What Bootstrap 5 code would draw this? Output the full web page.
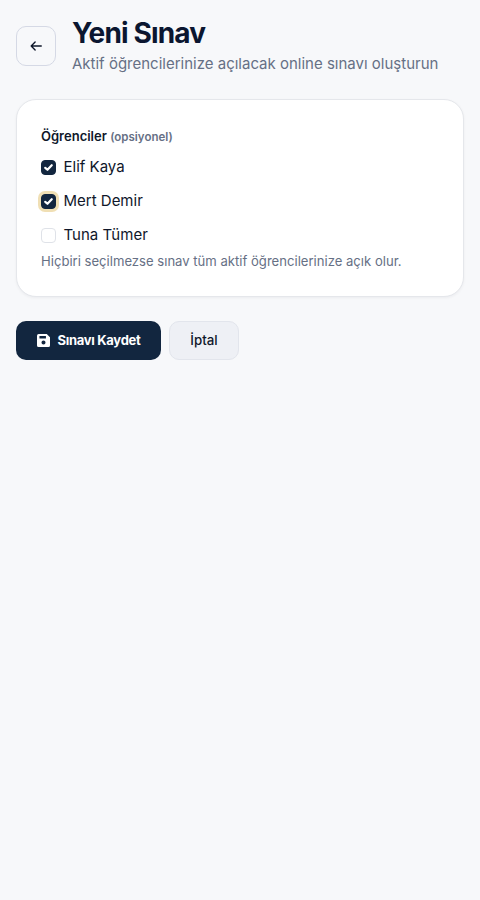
<!DOCTYPE html>
<html lang="tr">
<head>
<meta charset="utf-8">
<title>Yeni Sınav</title>
<link href="https://cdn.jsdelivr.net/npm/bootstrap@5.3.0/dist/css/bootstrap.min.css" rel="stylesheet">
<style>
body{background:#f7f8fa;font-family:Inter,"Liberation Sans",sans-serif;color:#0f172a;min-height:900px;}
.page-wrap{padding:16px;}
.head-row{gap:16px;margin-bottom:16px;height:67px;}
.back-btn{width:40px;height:40px;flex:none;border:1px solid #d5d9e5;border-radius:10px;background:transparent;margin-top:10px;color:#0f172a;padding:0;}
.page-title{font-size:28px;font-weight:700;line-height:34px;letter-spacing:-.84px;color:#0b1630;margin:0 0 2px;}
.page-sub{font-size:15px;line-height:24px;color:#667085;margin:0;}
.form-box{background:#fff;border:1px solid #e5e7eb;border-radius:20px;padding:24px;height:198px;box-shadow:0 1px 3px rgba(15,23,42,.05);margin-bottom:24px;}
.field-label{font-size:13px;font-weight:600;line-height:24px;color:#0f172a;margin-bottom:1px;display:block;}
.field-label span{font-size:11.5px;color:#667085;font-weight:600;}
.form-check.opt-row{margin:0;padding:0;min-height:34px;gap:7.5px;}
.opt-row .form-check-input{width:15px;height:15px;margin:0;float:none;border:1px solid #dfe2e8;border-radius:4px;flex:none;box-shadow:none;}
.opt-row .form-check-input:checked{background-color:#12263f;border-color:#12263f;background-image:url("data:image/svg+xml,%3csvg xmlns='http://www.w3.org/2000/svg' viewBox='0 0 20 20'%3e%3cpath fill='none' stroke='%23fff' stroke-linecap='round' stroke-linejoin='round' stroke-width='3.4' d='m5 10.5 3.4 3L15 6.5'/%3e%3c/svg%3e");}
.opt-row .form-check-input.is-focus{box-shadow:0 0 0 3px #f0dfb4;}
.opt-row .form-check-label{font-size:15px;line-height:24px;color:#0f172a;}
.field-hint{font-size:13.1px;line-height:20px;color:#667085;margin:-1px 0 0;}
.save-btn{background:#12263f;color:#fff;border:0;border-radius:10px;height:39px;width:145px;font-size:13px;font-weight:700;letter-spacing:-.3px;gap:8px;padding:0;}
.save-btn:hover{background:#12263f;color:#fff;}
.cancel-btn{background:#eef0f5;color:#0f172a;border:1px solid #e2e5ec;border-radius:10px;height:39px;width:70px;font-size:13.3px;font-weight:500;padding:0;}
</style>
</head>
<body>
<div class="page-wrap">
  <div class="d-flex align-items-start head-row">
    <button type="button" class="btn back-btn d-flex align-items-center justify-content-center" aria-label="Geri">
      <svg width="14" height="14" viewBox="0 0 16 16" fill="none" stroke="currentColor" stroke-width="1.6" stroke-linecap="round" stroke-linejoin="round"><path d="M14 8H2.5M7 3.5 2.5 8 7 12.5"/></svg>
    </button>
    <div>
      <h1 class="page-title">Yeni Sınav</h1>
      <p class="page-sub">Aktif öğrencilerinize açılacak online sınavı oluşturun</p>
    </div>
  </div>
  <div class="form-box">
    <label class="field-label">Öğrenciler <span>(opsiyonel)</span></label>
    <div class="form-check opt-row d-flex align-items-center">
      <input class="form-check-input" type="checkbox" id="o1" checked>
      <label class="form-check-label" for="o1">Elif Kaya</label>
    </div>
    <div class="form-check opt-row d-flex align-items-center">
      <input class="form-check-input is-focus" type="checkbox" id="o2" checked>
      <label class="form-check-label" for="o2">Mert Demir</label>
    </div>
    <div class="form-check opt-row d-flex align-items-center">
      <input class="form-check-input" type="checkbox" id="o3">
      <label class="form-check-label" for="o3">Tuna Tümer</label>
    </div>
    <p class="field-hint">Hiçbiri seçilmezse sınav tüm aktif öğrencilerinize açık olur.</p>
  </div>
  <div class="d-flex gap-2">
    <button type="button" class="btn save-btn d-flex align-items-center justify-content-center">
      <svg width="13" height="13" viewBox="0 0 16 16" fill="#fff"><path fill-rule="evenodd" d="M2 0h10l4 4v10a2 2 0 0 1-2 2H2a2 2 0 0 1-2-2V2a2 2 0 0 1 2-2Zm1 2.5v3h8v-3H3ZM8 8a2.5 2.5 0 1 0 0 5 2.5 2.5 0 0 0 0-5Z"/></svg>
      <span>Sınavı Kaydet</span>
    </button>
    <button type="button" class="btn cancel-btn">İptal</button>
  </div>
</div>
<script src="https://cdn.jsdelivr.net/npm/bootstrap@5.3.0/dist/js/bootstrap.bundle.min.js"></script>
</body>
</html>
